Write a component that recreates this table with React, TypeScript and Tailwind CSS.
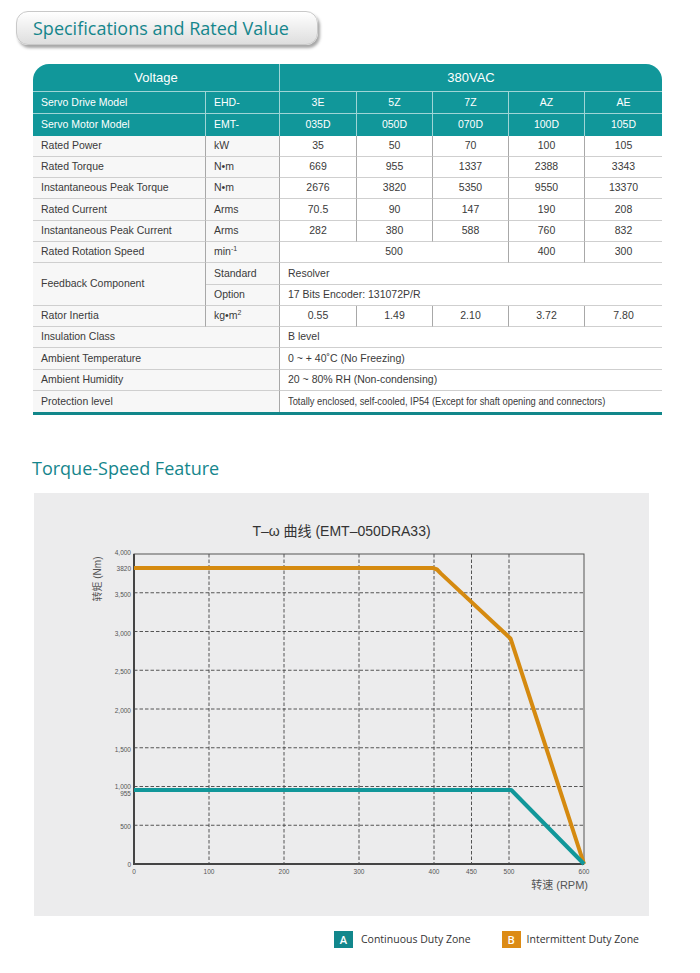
import React from "react";

const TEAL = "#11979a";
const ORANGE = "#d58a10";

function HeadCell({ children, className = "" }: { children?: React.ReactNode; className?: string }) {
  return (
    <div className={`flex items-center justify-center text-white border-r border-b border-white/60 ${className}`}>
      {children}
    </div>
  );
}

function Cell({
  children,
  className = "",
  left = false,
}: {
  children?: React.ReactNode;
  className?: string;
  left?: boolean;
}) {
  return (
    <div
      className={`flex items-center border-r border-b border-r-[#a8a8a8] border-b-[#cfcfcf] text-[#3a3a3a] ${
        left ? "justify-start pl-[8px]" : "justify-center"
      } ${className}`}
    >
      {children}
    </div>
  );
}

const values: { label: string; unit: React.ReactNode; vals: string[] }[] = [
  { label: "Rated Power", unit: "kW", vals: ["35", "50", "70", "100", "105"] },
  { label: "Rated Torque", unit: "N•m", vals: ["669", "955", "1337", "2388", "3343"] },
  { label: "Instantaneous Peak Torque", unit: "N•m", vals: ["2676", "3820", "5350", "9550", "13370"] },
  { label: "Rated Current", unit: "Arms", vals: ["70.5", "90", "147", "190", "208"] },
  { label: "Instantaneous Peak Current", unit: "Arms", vals: ["282", "380", "588", "760", "832"] },
];

function SpecTable() {
  return (
    <div className="ml-[33px] w-[629px] rounded-t-[16px] overflow-hidden text-[10.5px]" style={{ fontFamily: '"Liberation Sans", Arial, sans-serif' }}>
      <div className="grid grid-cols-[173px_74px_77px_76px_76px_76px_77px] grid-rows-[28px_22px_21.5px_repeat(13,21.3px)] bg-white">
        {/* header */}
        <HeadCell className="col-span-2 text-[13px] bg-[#11979a]">Voltage</HeadCell>
        <HeadCell className="col-span-5 text-[13px] bg-[#11979a] border-r-0">380VAC</HeadCell>
        <HeadCell className="justify-start pl-[8px] bg-[#11979a]"><span className="w-full">Servo Drive Model</span></HeadCell>
        <HeadCell className="justify-start pl-[8px] bg-[#11979a]"><span className="w-full">EHD-</span></HeadCell>
        {["3E", "5Z", "7Z", "AZ", "AE"].map((t, i) => (
          <HeadCell key={t} className={`bg-[#11979a] ${i === 4 ? "border-r-0" : ""}`}>{t}</HeadCell>
        ))}
        <HeadCell className="justify-start pl-[8px] bg-[#11979a] border-b-0"><span className="w-full">Servo Motor Model</span></HeadCell>
        <HeadCell className="justify-start pl-[8px] bg-[#11979a] border-b-0"><span className="w-full">EMT-</span></HeadCell>
        {["035D", "050D", "070D", "100D", "105D"].map((t, i) => (
          <HeadCell key={t} className={`bg-[#11979a] border-b-0 ${i === 4 ? "border-r-0" : ""}`}>{t}</HeadCell>
        ))}

        {values.map((r) => (
          <React.Fragment key={r.label}>
            <Cell left className="bg-[#f7f7f7]">{r.label}</Cell>
            <Cell left className="bg-[#f7f7f7]">{r.unit}</Cell>
            {r.vals.map((v, i) => (
              <Cell key={i} className={i === 4 ? "border-r-0" : ""}>{v}</Cell>
            ))}
          </React.Fragment>
        ))}

        <Cell left className="bg-[#f7f7f7]">Rated Rotation Speed</Cell>
        <Cell left className="bg-[#f7f7f7]">
          <span>min<sup className="text-[7px] relative -top-[4px]">-1</sup></span>
        </Cell>
        <Cell className="col-span-3">500</Cell>
        <Cell>400</Cell>
        <Cell className="border-r-0">300</Cell>

        <Cell left className="row-span-2 bg-[#f7f7f7]">Feedback Component</Cell>
        <Cell left className="bg-[#f7f7f7]">Standard</Cell>
        <Cell left className="col-span-5 border-r-0">Resolver</Cell>
        <Cell left className="bg-[#f7f7f7]">Option</Cell>
        <Cell left className="col-span-5 border-r-0">17 Bits Encoder: 131072P/R</Cell>

        <Cell left className="bg-[#f7f7f7]">Rator Inertia</Cell>
        <Cell left className="bg-[#f7f7f7]">
          <span>kg•m<sup className="text-[7px] relative -top-[4px]">2</sup></span>
        </Cell>
        {["0.55", "1.49", "2.10", "3.72", "7.80"].map((v, i) => (
          <Cell key={i} className={i === 4 ? "border-r-0" : ""}>{v}</Cell>
        ))}

        <Cell left className="col-span-2 bg-[#f7f7f7]">Insulation Class</Cell>
        <Cell left className="col-span-5 border-r-0">B level</Cell>
        <Cell left className="col-span-2 bg-[#f7f7f7]">Ambient Temperature</Cell>
        <Cell left className="col-span-5 border-r-0">0 ~ + 40˚C (No Freezing)</Cell>
        <Cell left className="col-span-2 bg-[#f7f7f7]">Ambient Humidity</Cell>
        <Cell left className="col-span-5 border-r-0">20 ~ 80% RH (Non-condensing)</Cell>
        <Cell left className="col-span-2 bg-[#f7f7f7] border-b-0">Protection level</Cell>
        <Cell left className="col-span-5 border-r-0 border-b-0 overflow-hidden">
          <span className="text-[10.5px] whitespace-nowrap inline-block origin-left scale-x-[0.89]">
            Totally enclosed, self-cooled, IP54 (Except for shaft opening and connectors)
          </span>
        </Cell>
      </div>
      <div className="h-[3px] bg-[#11878a]" />
    </div>
  );
}

function Chart() {
  const X = (r: number) => 100 + r * 0.75;
  const Y = (v: number) => 324 - v * 0.0775;
  const vgrid = [100, 200, 300, 400, 450, 500];
  const hgrid = [500, 1000, 1500, 2000, 2500, 3000, 3500];
  const ylabels: [string, number][] = [
    ["4,000", Y(4000) - 1],
    ["3820", Y(3820) + 1],
    ["3,500", Y(3500) + 2],
    ["3,000", Y(3000) + 2],
    ["2,500", Y(2500) + 2],
    ["2,000", Y(2000) + 2],
    ["1,500", Y(1500) + 2],
    ["1,000", Y(1000)],
    ["955", Y(955) + 4],
    ["500", Y(500) + 2],
    ["0", Y(0) + 1],
  ];
  const xlabels = [0, 100, 200, 300, 400, 450, 500, 600];
  return (
    <svg width="615" height="376" viewBox="0 0 615 376" className="block" style={{ fontFamily: '"Liberation Sans", Arial, "Noto Sans CJK SC", sans-serif' }}>
      {hgrid.map((v) => (
        <line key={v} x1={X(0)} x2={X(600)} y1={Y(v)} y2={Y(v)} stroke="#444" strokeWidth="0.9" strokeDasharray="3.5 2" />
      ))}
      {vgrid.map((r) => (
        <line key={r} x1={X(r)} x2={X(r)} y1={Y(4000)} y2={Y(0)} stroke="#444" strokeWidth="0.9" strokeDasharray="3.5 2" />
      ))}
      <rect x={X(0)} y={Y(4000)} width={X(600) - X(0)} height={Y(0) - Y(4000)} fill="none" stroke="#555" strokeWidth="1" />
      <line x1={X(0)} x2={X(0)} y1={Y(4000)} y2={Y(0) + 1} stroke="#444" strokeWidth="2" />
      <line x1={X(0) - 1} x2={X(600)} y1={Y(0)} y2={Y(0)} stroke="#444" strokeWidth="2" />
      <polyline
        points={`${X(0)},${Y(3820)} ${X(398)},${Y(3820)} ${X(404)},${Y(3800)} ${X(409)},${Y(3750)} ${X(502)},${Y(2910)} ${X(600)},${Y(0)}`}
        fill="none"
        stroke={ORANGE}
        strokeWidth="4"
        strokeLinejoin="round"
      />
      <polyline
        points={`${X(0)},${Y(955)} ${X(503)},${Y(955)} ${X(600)},${Y(0)}`}
        fill="none"
        stroke={TEAL}
        strokeWidth="4"
        strokeLinejoin="round"
      />
      {ylabels.map(([t, y]) => (
        <text key={t} x={97} y={y + 2} fontSize="6.5" fill="#555" textAnchor="end">
          {t}
        </text>
      ))}
      {xlabels.map((r) => (
        <text key={r} x={X(r)} y={334} fontSize="6.5" fill="#555" textAnchor="middle">
          {r}
        </text>
      ))}
      <text x={67} y={39} fontSize="10" fill="#555" textAnchor="middle" transform="rotate(-90 67 39)">
        转矩 (Nm)
      </text>
      <text x={554} y={349} fontSize="11" fill="#555" textAnchor="end">
        转速 (RPM)
      </text>
    </svg>
  );
}

export default function App() {
  return (
    <div className="w-[700px] h-[973px] bg-white relative overflow-hidden">
      <div className="pt-[11px] pl-[16px]">
        <div
          className="w-[302px] h-[34px] rounded-[12px] border border-[#c9c9c9] flex items-center pl-[16px] bg-gradient-to-b from-white to-[#dedede] shadow-[2px_3px_3px_rgba(0,0,0,0.35)]"
        >
          <span className="text-[18px] text-[#15868c] leading-none font-medium" style={{ fontFamily: '"Open Sans", sans-serif' }}>
            Specifications and Rated Value
          </span>
        </div>
      </div>
      <div className="mt-[19px]">
        <SpecTable />
      </div>
      <div className="mt-[42px] pl-[32px]">
        <h2 className="text-[18px] text-[#15868c] leading-[22px] font-medium" style={{ fontFamily: '"Open Sans", sans-serif' }}>
          Torque-Speed Feature
        </h2>
      </div>
      <div className="mt-[14px] ml-[34px] w-[615px] h-[423px] bg-[#ececed] flex flex-col">
        <div className="pt-[29px] text-center text-[14px] leading-[18px] text-[#333]" style={{ fontFamily: '"Liberation Sans", Arial, "Noto Sans CJK SC", sans-serif' }}>
          T–ω 曲线 (EMT–050DRA33)
        </div>
        <Chart />
      </div>
      <div className="mt-[15px] flex items-center text-[10.5px] text-[#333]" style={{ fontFamily: '"Open Sans", sans-serif' }}>
        <div className="ml-[334px] w-[19px] h-[17px] bg-[#12878c] text-white flex items-center justify-center text-[11px] font-semibold">A</div>
        <span className="ml-[8px]">Continuous Duty Zone</span>
        <div className="ml-[31px] w-[19px] h-[17px] bg-[#dc8b15] text-white flex items-center justify-center text-[11px] font-semibold">B</div>
        <span className="ml-[6px]">Intermittent Duty Zone</span>
      </div>
    </div>
  );
}
